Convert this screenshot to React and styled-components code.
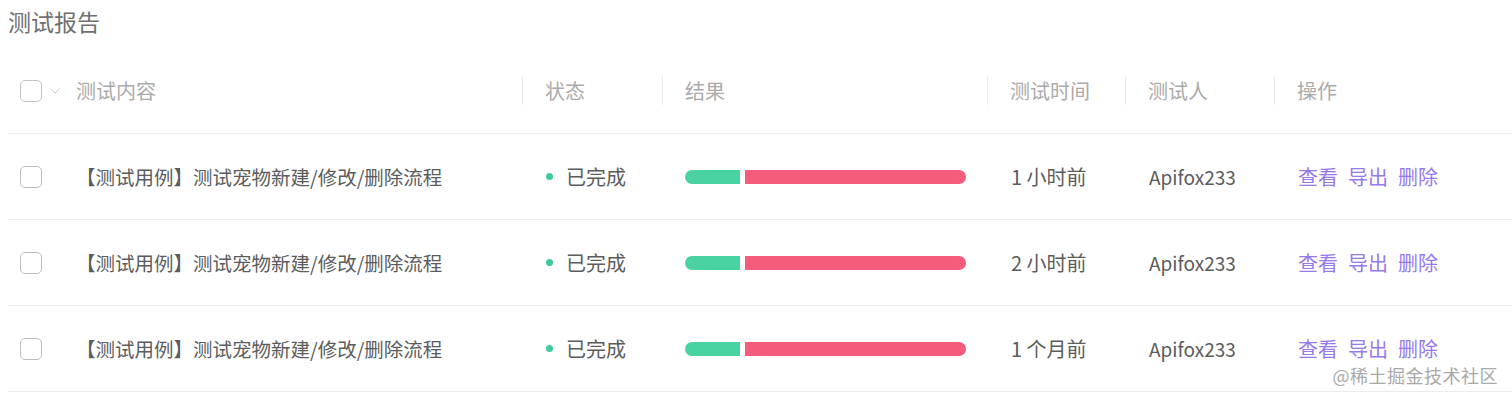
import React from "react";
import styled, { createGlobalStyle } from "styled-components";

const GlobalStyle = createGlobalStyle`
  html, body {
    margin: 0;
    padding: 0;
    background: #fff;
  }
  body {
    font-family: "Noto Sans CJK SC", "Noto Sans", sans-serif;
  }
`;

const COLUMNS = "68px 446px 140px 325px 138px 149px 1fr";

const reports = [
  { id: 1, name: "【测试用例】测试宠物新建/修改/删除流程", status: "已完成", pass: 55, fail: 221, time: "1 小时前", tester: "Apifox233" },
  { id: 2, name: "【测试用例】测试宠物新建/修改/删除流程", status: "已完成", pass: 55, fail: 221, time: "2 小时前", tester: "Apifox233" },
  { id: 3, name: "【测试用例】测试宠物新建/修改/删除流程", status: "已完成", pass: 55, fail: 221, time: "1 个月前", tester: "Apifox233" },
];

const App = () => {
  return (
    <Page>
      <GlobalStyle />
      <Title>测试报告</Title>
      <Table>
        <HeaderRow>
          <SelectCell>
            <Checkbox $light />
            <Chevron width="10" height="6" viewBox="0 0 10 6">
              <polyline points="0.5,0.5 5,5.2 9.5,0.5" fill="none" stroke="#c8c8c8" strokeWidth="1" />
            </Chevron>
          </SelectCell>
          <HeadCell>测试内容</HeadCell>
          <HeadCell $divided>状态</HeadCell>
          <HeadCell $divided>结果</HeadCell>
          <HeadCell $divided>测试时间</HeadCell>
          <HeadCell $divided>测试人</HeadCell>
          <HeadCell $divided>操作</HeadCell>
        </HeaderRow>
        {reports.map((r) => (
          <Row key={r.id}>
            <SelectCell>
              <Checkbox />
            </SelectCell>
            <Cell $size="19.5px">{r.name}</Cell>
            <Cell $pad>
              <Dot />
              {r.status}
            </Cell>
            <Cell $pad>
              <Bar>
                <Pass style={{ width: r.pass }} />
                <Fail style={{ width: r.fail }} />
              </Bar>
            </Cell>
            <Cell $pad>{r.time}</Cell>
            <Cell $pad $size="19px">{r.tester}</Cell>
            <Cell $pad>
              <Actions>
                <ActionLink>查看</ActionLink>
                <ActionLink>导出</ActionLink>
                <ActionLink>删除</ActionLink>
              </Actions>
            </Cell>
          </Row>
        ))}
      </Table>
      <Watermark>@稀土掘金技术社区</Watermark>
    </Page>
  );
};

const Page = styled.main`
  position: relative;
  height: 400px;
  padding-left: 8px;
  overflow: hidden;
`;

const Title = styled.h2`
  margin: 0 0 5px;
  font-size: 23px;
  font-weight: 400;
  line-height: 43px;
  color: #707070;
`;

const Table = styled.div`
  display: flex;
  flex-direction: column;
`;

const HeaderRow = styled.div`
  display: grid;
  grid-template-columns: ${COLUMNS};
  height: 85px;
  border-bottom: 1px solid #ececec;
`;

const Row = styled(HeaderRow)``;

const SelectCell = styled.div`
  display: flex;
  align-items: center;
  gap: 8px;
  padding-left: 12px;
`;

const Checkbox = styled.span`
  display: block;
  width: 22px;
  height: 22px;
  box-sizing: border-box;
  border: 1px solid ${(p) => (p.$light ? "#c4c4c4" : "#bdbdbd")};
  border-radius: 5px;
  background: #fff;
`;

const Chevron = styled.svg`
  display: block;
  margin-top: 1px;
`;

const HeadCell = styled.div`
  display: flex;
  align-items: center;
  font-size: 20px;
  color: #ababab;

  &::before {
    content: "";
    display: ${(p) => (p.$divided ? "block" : "none")};
    width: 1px;
    height: 29px;
    margin-right: 22px;
    background: #ededed;
  }
`;

const Cell = styled.div`
  display: flex;
  align-items: center;
  padding-left: ${(p) => (p.$pad ? "24px" : "0")};
  font-size: ${(p) => p.$size || "20px"};
  color: #5c5c5c;
  white-space: nowrap;
`;

const Dot = styled.span`
  width: 7px;
  height: 7px;
  border-radius: 50%;
  background: #3fcb98;
  margin-right: 13px;
`;

const Bar = styled.div`
  display: flex;
  gap: 5px;
  height: 14px;
  margin-left: -1px;
`;

const Pass = styled.div`
  background: #48d3a0;
  border-radius: 7px 0 0 7px;
`;

const Fail = styled.div`
  background: #f55b7b;
  border-radius: 0 7px 7px 0;
`;

const Actions = styled.div`
  display: flex;
  gap: 10px;
`;

const ActionLink = styled.a`
  color: #9679ec;
  cursor: pointer;
  font-size: 20px;
`;

const Watermark = styled.div`
  position: absolute;
  right: 14px;
  bottom: 12px;
  font-size: 18px;
  color: #a9a9a9;
  text-shadow: 0 0 2px #fff, 0 0 1px #fff;
  letter-spacing: 0.5px;
`;

export default App;
